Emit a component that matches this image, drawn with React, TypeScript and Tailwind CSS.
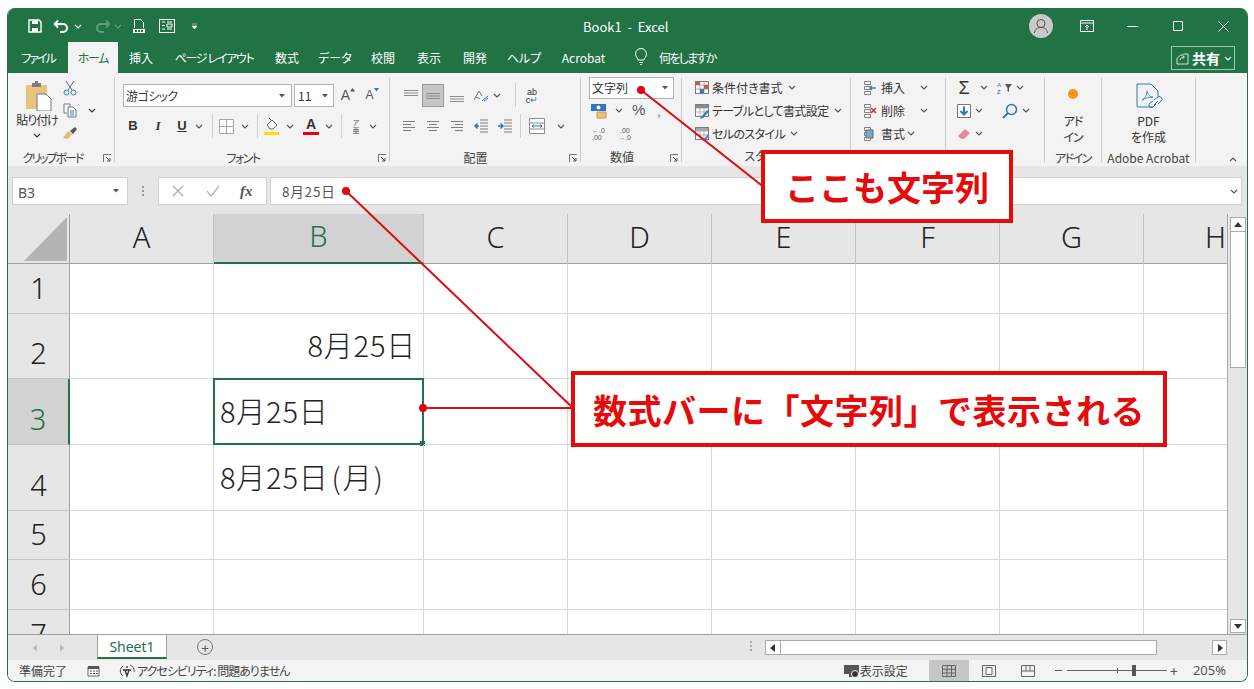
import type { ReactNode } from "react";

const tabs = [
  { label: "ファイル", cls: "w-[60px] tracking-[-2px]" },
  { label: "ホーム", cls: "w-[50px] h-[31px] bg-[#f3f3f3] text-[#217346] tracking-[-1.300px]" },
  { label: "挿入", cls: "w-[46px]" },
  { label: "ページ レイアウト", cls: "w-[100px] tracking-[-1.300px]" },
  { label: "数式", cls: "w-[46px]" },
  { label: "データ", cls: "w-[50px]" },
  { label: "校閲", cls: "w-[46px]" },
  { label: "表示", cls: "w-[46px]" },
  { label: "開発", cls: "w-[46px]" },
  { label: "ヘルプ", cls: "w-[52px]" },
  { label: "Acrobat", cls: "w-[67px]" },
];

const columns = [
  { name: "A", cls: "w-[144px]" },
  { name: "B", cls: "w-[210px] bg-[#d2d2d2] text-[#217346] border-b-2 border-b-[#217346]" },
  { name: "C", cls: "w-[144px]" },
  { name: "D", cls: "w-[144px]" },
  { name: "E", cls: "w-[144px]" },
  { name: "F", cls: "w-[144px]" },
  { name: "G", cls: "w-[144px]" },
  { name: "H", cls: "w-[144px]" },
];

const rows: { n: number; h: string; b?: ReactNode; right?: boolean; active?: boolean }[] = [
  { n: 1, h: "h-[50px]" },
  { n: 2, h: "h-[65px]", b: "8月25日", right: true },
  { n: 3, h: "h-[66px]", b: "8月25日", active: true },
  { n: 4, h: "h-[66px]", b: <>8月25日<span className="ml-[3px] tracking-[2px]">(月)</span></> },
  { n: 5, h: "h-[49px]" },
  { n: 6, h: "h-[50px]" },
  { n: 7, h: "h-[50px]" },
];

function Chev({ className = "text-[#555]" }: { className?: string }) {
  return (
    <svg width="8" height="5" viewBox="0 0 8 5" className={className}>
      <path d="M1 1l3 3 3-3" fill="none" stroke="currentColor" strokeWidth="1.1" />
    </svg>
  );
}

function Drop() {
  return (
    <svg width="6" height="4" viewBox="0 0 6 4" className="text-[#555]">
      <path d="M0 0h6L3 3.500z" fill="currentColor" />
    </svg>
  );
}

function Launcher() {
  return (
    <svg width="9" height="9" viewBox="0 0 9 9" className="absolute bottom-[-1px] right-[2px]">
      <path d="M.5 8V.5H8" fill="none" stroke="#777" />
      <path d="M3 3l4 4M7 4v3H4" fill="none" stroke="#555" />
    </svg>
  );
}

function Sep() {
  return <div className="h-[24px] w-px bg-[#d0d0d0]" />;
}

function Group({ className, label, launcher, children }: { className: string; label: ReactNode; launcher?: boolean; children: ReactNode }) {
  return (
    <div className={`relative h-[84px] shrink-0 border-r border-[#c9c9c9] ${className}`}>
      <div className="h-[72px]">{children}</div>
      <div className="flex h-[14px] items-center justify-center whitespace-nowrap pt-[1px] text-[12px] text-[#444]">{label}</div>
      {launcher && <Launcher />}
    </div>
  );
}

function Lines({ kind }: { kind: "l" | "c" | "r" }) {
  const w = [12, 8, 12, 8];
  return (
    <svg width="14" height="14" viewBox="0 0 14 14">
      {w.map((v, i) => {
        const x = kind === "l" ? 1 : kind === "r" ? 13 - v : 7 - v / 2;
        return <rect key={i} x={x} y={2 + i * 3} width={v} height="1" fill="#808080" />;
      })}
    </svg>
  );
}

function VLines({ top }: { top: number }) {
  return (
    <svg width="16" height="14" viewBox="0 0 16 14">
      {[0, 1, 2].map((i) => (
        <rect key={i} x="1" y={top + i * 2.500} width="14" height="1" fill="#8a8a8a" />
      ))}
    </svg>
  );
}

function Indent({ flip }: { flip?: boolean }) {
  return (
    <svg width="16" height="14" viewBox="0 0 16 14">
      {[1, 4, 7, 10, 13].map((y) => (
        <rect key={y} x="7" y={y - 0.5} width="8" height="1" fill="#808080" />
      ))}
      <path d={flip ? "M1 7h4M3.500 4.500L6 7 3.500 9.500" : "M6 7H2M4.500 4.500L2 7l2.500 2.500"} fill="none" stroke="#2f74c0" strokeWidth="1.500" />
    </svg>
  );
}

function ListIcon({ kind }: { kind: "cond" | "table" | "cell" }) {
  return (
    <svg width="16" height="16" viewBox="0 0 16 16">
      <rect x="1.500" y="1.500" width="13" height="12" fill="#fff" stroke="#7a7a7a" />
      <path d="M1.500 5h13M1.500 9h13M6 1.500v12M10 1.500v12" stroke="#a0a0a0" strokeWidth="0.8" />
      {kind === "cond" && <path d="M2 2h4v3H2zM10 5h4v4h-4z" fill="#d2583a" />}
      {kind === "cond" && <path d="M6 9h4v4H6z" fill="#3c78c0" />}
      {kind === "table" && <path d="M2 2h12v3H2z" fill="#8c8c8c" />}
      {kind === "table" && <path d="M7 14l6-7 2 1.500-6 6.500-3 1z" fill="#3c78c0" />}
      {kind === "cell" && <path d="M2 2h12v3H2z" fill="#a8a8a8" />}
      {kind === "cell" && <path d="M9 14l5-6 1.500 1.500-5 6z" fill="#4a8ad0" />}
    </svg>
  );
}

function StyleRow({ kind, label, tight }: { kind: "cond" | "table" | "cell"; label: string; tight?: boolean }) {
  return (
    <div className="flex h-[23px] items-center gap-[2px] whitespace-nowrap">
      <ListIcon kind={kind} />
      <span className={tight ? "tracking-[-0.6px]" : ""}>{label}</span>
      <Chev className="ml-[3px] text-[#555]" />
    </div>
  );
}

function CellsIcon({ kind }: { kind: "ins" | "del" | "fmt" }) {
  return (
    <svg width="16" height="16" viewBox="0 0 16 16">
      <path d="M3.500 1.500h6v3h-6zM3.500 6.500h6v3h-6zM3.500 11.500h6v3h-6z" fill="#fff" stroke="#808080" />
      {kind === "ins" && <path d="M9 8h6M11 6l-2 2 2 2" fill="none" stroke="#3a7cc4" strokeWidth="1.300" />}
      {kind === "del" && <path d="M10 5l5 5M15 5l-5 5" stroke="#d83b2b" strokeWidth="1.700" />}
      {kind === "fmt" && <path d="M5 4h7v8H5z" fill="#7ea6d2" stroke="#666" />}
    </svg>
  );
}

function FontSizeIcon({ up }: { up?: boolean }) {
  return (
    <div className="flex h-[23px] w-[16px] items-start justify-center pt-[3px] text-[#555]">
      <span className={`font-['Liberation_Sans',sans-serif] leading-none ${up ? "mt-[1px] text-[14px]" : "mt-[2px] text-[12px]"}`}>A</span>
      <svg width="5" height="4" viewBox="0 0 5 4" className="mt-[1px]">
        <path d={up ? "M0 3.500h5L2.500 0z" : "M0 0h5L2.500 3.500z"} fill={up ? "#555" : "#2f74c0"} />
      </svg>
    </div>
  );
}

function Scrollbtn({ d, className }: { d: string; className: string }) {
  return (
    <div className={`flex shrink-0 items-center justify-center border border-[#ababab] bg-white ${className}`}>
      <svg width="8" height="8" viewBox="0 0 8 8">
        <path d={d} fill="#333" />
      </svg>
    </div>
  );
}

function TitleBar() {
  return (
    <div className="relative flex h-[34px] shrink-0 items-center bg-[#217346] pt-[2px] text-white">
      <div className="ml-[19px] flex items-center">
        <svg width="16" height="16" viewBox="0 0 16 16">
          <path d="M2 2h10l2 2v10H2z" fill="none" stroke="#fff" strokeWidth="1.400" />
          <path d="M5 2.500h6v3.500H5z" fill="#fff" />
          <path d="M5 10h6v4H5z" fill="#fff" />
        </svg>
        <svg width="18" height="16" viewBox="0 0 18 16" className="ml-[10px]">
          <path d="M2 6h8a4 4 0 0 1 0 8H7M5 2.500L1.800 6 5 9.500" fill="none" stroke="#fff" strokeWidth="2" />
        </svg>
        <Chev className="ml-[3px] text-white" />
        <svg width="18" height="16" viewBox="0 0 18 16" className="ml-[11px]">
          <path d="M16 6H8a4 4 0 0 0 0 8h3M13 2.500L16.200 6 13 9.500" fill="none" stroke="#5f9d7e" strokeWidth="2" />
        </svg>
        <Chev className="ml-[3px] text-[#5f9d7e]" />
        <svg width="14" height="16" viewBox="0 0 14 16" className="ml-[10px]">
          <path d="M2.500 10V1.500h6l3 3V10" fill="none" stroke="#fff" />
          <path d="M1 11h12v4H1z" fill="#fff" />
          <path d="M3 12h2v2H3zM6 12h2v2H6zM9 12h2v2H9z" fill="#217346" />
        </svg>
        <svg width="16" height="14" viewBox="0 0 16 14" className="ml-[13px]">
          <rect x="0.500" y="0.500" width="15" height="13" fill="none" stroke="#fff" />
          <path d="M3 3h3M8 3h5M3 6.500h3M8 5h5v3H8zM3 10h3M8 10h5" stroke="#fff" fill="none" />
        </svg>
        <svg width="7" height="7" viewBox="0 0 7 7" className="ml-[16px]">
          <path d="M1 1h5M1 3h5L3.500 6z" fill="#fff" stroke="#fff" strokeWidth="0.500" />
        </svg>
      </div>
      <div className="absolute left-[575px] top-[2px] flex h-full items-center whitespace-pre text-[13px]">Book1  -  Excel</div>
      <div className="ml-auto flex items-center">
        <div className="flex h-[24px] w-[24px] items-center justify-center rounded-full bg-[#c9c9c9]">
          <svg width="18" height="18" viewBox="0 0 18 18">
            <circle cx="9" cy="6.500" r="4" fill="none" stroke="#555" />
            <path d="M2.500 16c.5-4 3-5.500 6.500-5.500s6 1.500 6.500 5.500" fill="none" stroke="#555" />
          </svg>
        </div>
        <svg width="14" height="12" viewBox="0 0 14 12" className="ml-[27px]">
          <path d="M.5.500h13v11H.5zM.5 3h13" fill="none" stroke="#fff" />
          <path d="M7 10V5M5 7l2-2 2 2" fill="none" stroke="#fff" />
        </svg>
        <div className="ml-[33px] h-px w-[11px] bg-white" />
        <div className="ml-[35px] h-[10px] w-[10px] rounded-[1px] border border-white" />
        <svg width="11" height="11" viewBox="0 0 11 11" className="ml-[35px] mr-[18px]">
          <path d="M.5.500l10 10M10.500.500l-10 10" stroke="#fff" />
        </svg>
      </div>
    </div>
  );
}

function TabBar() {
  return (
    <div className="flex h-[31px] shrink-0 items-start bg-[#217346] text-[12px] text-white [font-feature-settings:'palt']">
      {tabs.map((t) => (
        <div key={t.label} className={`flex h-[31px] shrink-0 items-center justify-center whitespace-nowrap ${t.cls}`}>
          {t.label}
        </div>
      ))}
      <svg width="14" height="18" viewBox="0 0 14 18" className="ml-[17px] mt-[6px]">
        <path d="M4 12c0-2-2.500-3-2.500-6a5.500 5.500 0 0 1 11 0c0 3-2.500 4-2.500 6zM5 14.500h4M6 16.500h2" fill="none" stroke="#fff" />
      </svg>
      <div className="ml-[11px] flex h-[31px] items-center tracking-[-1.700px]">何をしますか</div>
      <div className="ml-auto mr-[12px] mt-[4px] flex h-[24px] w-[64px] items-center border border-[#9fc5b0] pl-[4px]">
        <svg width="13" height="13" viewBox="0 0 13 13">
          <path d="M7 2h5v10H1V6.500L4.500 3H7" fill="none" stroke="#fff" strokeWidth="0.800" />
          <path d="M4 8c.5-2 2-3 4-3M6.500 3.500L8.500 5 6.500 6.500" fill="none" stroke="#fff" strokeWidth="0.800" />
        </svg>
        <span className="ml-[3px] text-[14px] font-bold leading-none">共有</span>
        <Chev className="ml-[4px] text-white" />
      </div>
    </div>
  );
}

function Ribbon() {
  return (
    <div className="flex h-[93px] shrink-0 bg-[#f3f3f3] pt-[5px] text-[12px] text-[#333] [font-feature-settings:'palt']">
      <Group className="w-[107px]" label={<span className="-ml-[17px] tracking-[-2px]">クリップボード</span>} launcher>
        <div className="flex">
          <div className="ml-[9px] flex w-[40px] flex-col items-center">
            <svg width="28" height="30" viewBox="0 0 28 30" className="ml-[4px] mt-[3px]">
              <path d="M1 4h21v24H1z" fill="#e8c27f" />
              <path d="M7 2h3V0h3v2h3v4H7z" fill="#7d7d7d" />
              <path d="M12 13h9l5 5v12H12z" fill="#fff" stroke="#777" />
            </svg>
            <span className="whitespace-nowrap tracking-[-1px]">貼り付け</span>
            <Chev className="mt-[4px]" />
          </div>
          <div className="ml-[5px] flex flex-col items-center">
            <svg width="14" height="16" viewBox="0 0 14 16" className="mt-[2px]">
              <path d="M3 1l6 9M11 1l-6 9" stroke="#666" />
              <circle cx="3.500" cy="12.500" r="2.500" fill="none" stroke="#3c78c0" />
              <circle cx="10.500" cy="12.500" r="2.500" fill="none" stroke="#3c78c0" />
            </svg>
            <svg width="14" height="15" viewBox="0 0 14 15" className="mt-[7px]">
              <path d="M1 1h6v3M1 1v9h3" fill="#fff" stroke="#777" />
              <path d="M5 4h5l3 3v7H5z" fill="#fff" stroke="#777" />
              <path d="M7 8h4M7 10h4M7 12h4" stroke="#3c78c0" />
            </svg>
            <svg width="16" height="14" viewBox="0 0 16 14" className="mt-[8px]">
              <path d="M1 12l5-7 4 3-4 5z" fill="#e3bb76" />
              <path d="M8 5l5-4 2 2-4 5z" fill="#555" />
            </svg>
          </div>
          <Chev className="ml-[10px] mt-[30px]" />
        </div>
      </Group>

      <Group className="w-[275px]" label={<span className="-ml-[18px] tracking-[-1.500px]">フォント</span>} launcher>
        <div className="flex h-[29px] items-end pl-[8px]">
          <div className="flex h-[23px] w-[169px] items-center justify-between border border-[#b4b4b4] bg-white pl-[2px] pr-[6px] text-[12px] tracking-[-0.6px]">
            游ゴシック
            <Drop />
          </div>
          <div className="ml-[2px] flex h-[23px] w-[40px] items-center justify-between border border-[#b4b4b4] bg-white pl-[3px] pr-[5px] text-[12px]">
            11
            <Drop />
          </div>
          <div className="ml-[6px]"><FontSizeIcon up /></div>
          <div className="ml-[8px]"><FontSizeIcon /></div>
        </div>
        <div className="mt-[7px] flex h-[24px] items-center pl-[8px]">
          <b className="flex w-[20px] justify-center font-['Liberation_Sans',sans-serif] text-[13px]">B</b>
          <i className="ml-[5px] flex w-[20px] justify-center font-['Liberation_Serif',serif] text-[13px] font-bold">I</i>
          <u className="ml-[4px] flex w-[20px] justify-center font-['Liberation_Sans',sans-serif] text-[13px] font-bold">U</u>
          <div className="flex w-[14px] justify-center"><Chev /></div>
          <div className="ml-[6px]"><Sep /></div>
          <div className="ml-[3px] flex w-[20px] justify-center">
            <svg width="15" height="15" viewBox="0 0 15 15">
              <path d="M.5.500h14v14H.5zM7.500.500v14M.5 7.500h14" fill="#fff" stroke="#a5a5a5" />
            </svg>
          </div>
          <div className="ml-[2px] flex w-[14px] justify-center"><Chev /></div>
          <div className="ml-[5px]"><Sep /></div>
          <div className="ml-[4px] flex w-[20px] justify-center">
            <svg width="16" height="18" viewBox="0 0 16 18">
              <path d="M3 8l5-5 5 5-4 4H6z" fill="#fff" stroke="#666" />
              <path d="M5 1l3 3" stroke="#666" />
              <path d="M0 15h15v3H0z" fill="#f5e500" />
            </svg>
          </div>
          <div className="ml-[1px] flex w-[14px] justify-center"><Chev /></div>
          <div className="ml-[4px] flex w-[20px] flex-col items-center">
            <span className="font-['Liberation_Sans',sans-serif] text-[14px] font-bold leading-[14px]">A</span>
            <div className="mt-[1px] h-[3px] w-[16px] bg-[#e60012]" />
          </div>
          <div className="ml-[1px] flex w-[14px] justify-center"><Chev /></div>
          <div className="ml-[5px]"><Sep /></div>
          <div className="ml-[4px] flex w-[20px] flex-col items-center text-[7px] leading-[8px] text-[#555]">
            <span>ア</span>
            <span>亜</span>
          </div>
          <div className="flex w-[14px] justify-center"><Chev /></div>
        </div>
      </Group>

      <Group className="w-[191px]" label={<span className="-ml-[19px]">配置</span>} launcher>
        <div className="flex h-[29px] items-end pl-[10px]">
          <div className="flex h-[23px] w-[22px] items-center justify-center"><VLines top={1} /></div>
          <div className="flex h-[23px] w-[22px] items-center justify-center border border-[#9a9a9a] bg-[#c6c6c6]"><VLines top={4} /></div>
          <div className="ml-[2px] flex h-[23px] w-[22px] items-center justify-center"><VLines top={7} /></div>
          <div className="ml-[3px] flex h-[23px] w-[20px] items-center justify-center">
            <svg width="16" height="14" viewBox="0 0 16 14">
              <path d="M1 11l5-9 3 5M3 8l4 2" fill="none" stroke="#777" />
              <path d="M9 12l6-5M11 12l4-3" stroke="#3c78c0" />
            </svg>
          </div>
          <div className="flex h-[23px] w-[12px] items-center justify-center"><Chev /></div>
          <div className="ml-[12px]"><Sep /></div>
          <div className="ml-[6px] flex h-[23px] w-[20px] flex-col items-center justify-center font-['Liberation_Sans',sans-serif] text-[9px] leading-[8px]">
            <span>ab</span>
            <span>c<span className="text-[#2f74c0]">↵</span></span>
          </div>
        </div>
        <div className="mt-[7px] flex h-[24px] items-center pl-[12px]">
          <div className="flex w-[14px] justify-center"><Lines kind="l" /></div>
          <div className="ml-[10px] flex w-[14px] justify-center"><Lines kind="c" /></div>
          <div className="ml-[10px] flex w-[14px] justify-center"><Lines kind="r" /></div>
          <div className="ml-[9px] flex w-[16px] justify-center"><Indent /></div>
          <div className="ml-[8px] flex w-[16px] justify-center"><Indent flip /></div>
          <div className="ml-[7px]"><Sep /></div>
          <div className="ml-[7px] flex w-[18px] justify-center">
            <svg width="16" height="16" viewBox="0 0 16 16">
              <path d="M.5.500h15v15H.5zM.5 5h15M.5 11h15" fill="#fff" stroke="#8a8a8a" />
              <path d="M3 8h10M5 6.500L3 8l2 1.500M11 6.500L13 8l-2 1.500" fill="none" stroke="#2f74c0" />
            </svg>
          </div>
          <div className="ml-[10px] flex w-[10px] justify-center"><Chev /></div>
        </div>
      </Group>

      <Group className="w-[101px]" label={<span className="-ml-[18px]">数値</span>} launcher>
        <div className="ml-[8px] mt-[-1px] flex h-[22px] w-[85px] items-center justify-between border border-[#b4b4b4] bg-white pl-[2px] pr-[5px]">
          文字列
          <Drop />
        </div>
        <div className="flex h-[23px] items-center pl-[10px]">
          <svg width="16" height="16" viewBox="0 0 16 16">
            <path d="M0 1h15v7H0z" fill="#2f74c0" />
            <circle cx="7.500" cy="4.500" r="2" fill="#fff" />
            <path d="M6 9h9v6H6z" fill="#e8c27f" stroke="#c89b4a" />
          </svg>
          <Chev className="ml-[8px] text-[#555]" />
          <span className="ml-[9px] font-['Liberation_Sans',sans-serif] text-[15px] text-[#555]">%</span>
          <span className="ml-[12px] text-[#888]">,</span>
        </div>
        <div className="flex h-[23px] items-center pl-[11px] font-['Liberation_Sans',sans-serif] text-[7px] leading-[7px] text-[#555]">
          <div className="w-[14px]">
            <span className="text-[#2f74c0]">←</span>.0
            <br />
            .00
          </div>
          <div className="ml-[12px] w-[14px]">
            &nbsp;.00
            <br />
            <span className="text-[#2f74c0]">→</span>.0
          </div>
        </div>
      </Group>

      <Group className="w-[169px]" label="スタイル">
        <div className="-mt-[2px] pl-[12px]">
          <StyleRow kind="cond" label="条件付き書式" />
          <StyleRow kind="table" label="テーブルとして書式設定" tight />
          <StyleRow kind="cell" label="セルのスタイル" tight />
        </div>
      </Group>

      <Group className="w-[95px]" label="">
        <div className="-mt-[2px] pl-[10px]">
          {[
            { k: "ins" as const, t: "挿入", c: "ml-[15px]" },
            { k: "del" as const, t: "削除", c: "ml-[15px]" },
            { k: "fmt" as const, t: "書式", c: "ml-[2px]" },
          ].map((r) => (
            <div key={r.t} className="flex h-[23px] items-center whitespace-nowrap">
              <CellsIcon kind={r.k} />
              <span className="ml-[4px]">{r.t}</span>
              <Chev className={`${r.c} text-[#555]`} />
            </div>
          ))}
        </div>
      </Group>

      <Group className="w-[99px]" label="">
        <div className="-mt-[2px] flex h-[23px] items-center pl-[10px]">
          <span className="flex w-[16px] justify-center font-['Liberation_Sans',sans-serif] text-[18px] leading-none">Σ</span>
          <Chev className="ml-[8px] text-[#555]" />
          <svg width="16" height="14" viewBox="0 0 16 14" className="ml-[9px]">
            <text x="0" y="6" fontSize="6" fill="#2f74c0" fontFamily="Liberation Sans">A</text>
            <text x="0" y="13" fontSize="6" fill="#555" fontFamily="Liberation Sans">Z</text>
            <path d="M8 3h7l-3 4v4l-1.500-1V7z" fill="#555" />
          </svg>
          <Chev className="ml-[3px] text-[#555]" />
        </div>
        <div className="flex h-[23px] items-center pl-[11px]">
          <svg width="14" height="14" viewBox="0 0 14 14">
            <path d="M.5.500h13v13H.5z" fill="#fff" stroke="#777" />
            <path d="M7 2.500v8M3.500 7L7 10.500 10.500 7" fill="none" stroke="#2f74c0" strokeWidth="2" />
          </svg>
          <Chev className="ml-[4px] text-[#555]" />
          <svg width="16" height="16" viewBox="0 0 16 16" className="ml-[19px]">
            <circle cx="9.500" cy="6.500" r="5" fill="none" stroke="#2f74c0" strokeWidth="1.500" />
            <path d="M6 10l-5 5" stroke="#2f74c0" strokeWidth="1.800" />
          </svg>
          <Chev className="ml-[4px] text-[#555]" />
        </div>
        <div className="flex h-[23px] items-center pl-[11px]">
          <svg width="14" height="12" viewBox="0 0 14 12">
            <path d="M1 8l7-7 5 4-6 6H4z" fill="#e58aa0" />
          </svg>
          <Chev className="ml-[4px] text-[#555]" />
        </div>
      </Group>

      <Group className="w-[57px]" label={<span className="tracking-[-1.500px]">アドイン</span>}>
        <div className="flex flex-col items-center">
          <div className="mt-[11px] h-[10px] w-[10px] rounded-full bg-[#f7941d]" />
          <div className="mt-[14px] text-center text-[12px] leading-[16px] tracking-[-1px]">
            アド
            <br />
            イン
          </div>
        </div>
      </Group>

      <Group className="w-[94px]" label="Adobe Acrobat">
        <div className="flex flex-col items-center">
          <svg width="28" height="28" viewBox="0 0 28 28" className="mt-[5px]">
            <path d="M18 24H3a1 1 0 0 1-1-1V1h14l7 7v6" fill="none" stroke="#2f74c0" />
            <path d="M7 17c3-1 5-5 5-9 1 4 3 6 6 6-3 0-8 1-11 3z" fill="none" stroke="#2f74c0" strokeWidth="0.800" />
            <path d="M19 17l4-3a2.500 2.500 0 0 1 3 4l-3 3M21 21l-3 3a2.500 2.500 0 0 1-3-4l3-2M19 22l4-4" fill="none" stroke="#2f74c0" />
          </svg>
          <div className="mt-[2px] text-center text-[12px] leading-[16px]">
            PDF
            <br />
            を作成
          </div>
        </div>
      </Group>

      <div className="relative flex-1">
        <Chev className="absolute bottom-[4px] right-[10px] rotate-180 text-[#555]" />
      </div>
    </div>
  );
}

function FormulaBar() {
  return (
    <div className="flex h-[48px] shrink-0 bg-[#e6e6e6] pl-[4px] pr-[5px] pt-[11px] text-[#555]">
      <div className="flex h-[28px] w-[116px] items-center justify-between border border-[#d0d0d0] bg-white pl-[5px] pr-[8px] text-[14px]">
        <span className="pt-[3px] font-['Noto_Sans',sans-serif]">B3</span>
        <Drop />
      </div>
      <div className="ml-[12px] flex h-[28px] w-[6px] flex-col items-center justify-center gap-[2px]">
        <i className="h-[2px] w-[2px] bg-[#999]" />
        <i className="h-[2px] w-[2px] bg-[#999]" />
        <i className="h-[2px] w-[2px] bg-[#999]" />
      </div>
      <div className="ml-[12px] flex h-[28px] w-[109px] items-center border border-[#d0d0d0] bg-white pl-[13px]">
        <svg width="12" height="12" viewBox="0 0 12 12">
          <path d="M1 1l10 10M11 1L1 11" stroke="#aaa" strokeWidth="1.300" />
        </svg>
        <svg width="14" height="12" viewBox="0 0 14 12" className="ml-[22px]">
          <path d="M1 6l4 5 8-10" fill="none" stroke="#bbb" strokeWidth="1.500" />
        </svg>
        <span className="ml-[20px] font-['Liberation_Serif',serif] text-[15px] font-bold italic leading-none text-[#555]">fx</span>
      </div>
      <div className="ml-[3px] flex h-[28px] flex-1 items-center justify-between border border-[#d0d0d0] bg-white pl-[11px] pr-[2px] text-[13.500px] tracking-[0.8px]">
        8月25日
        <Chev className="mr-[1px] text-[#555]" />
      </div>
    </div>
  );
}

function Sheet() {
  return (
    <div className="flex h-[420px] shrink-0 text-[#222]">
      <div className="h-full w-[1220px] overflow-hidden border-r border-[#ababab] bg-white">
        <div className="flex h-[50px] border-b border-[#9f9f9f] bg-[#e6e6e6] text-[29px] font-light">
          <div className="flex h-[49px] w-[62px] shrink-0 items-end justify-end border-r border-[#9f9f9f] pb-[2px] pr-[2px]">
            <div className="h-[44px] w-[43px] bg-[#b4b4b4] [clip-path:polygon(100%_0,100%_100%,0_100%)]" />
          </div>
          {columns.map((c) => (
            <div key={c.name} className={`flex h-[50px] shrink-0 items-center justify-center border-r border-[#c4c4c4] pb-[4px] font-['Noto_Sans',sans-serif] ${c.cls}`}>
              {c.name}
            </div>
          ))}
        </div>
        {rows.map((r) => (
          <div key={r.n} className={`flex ${r.h}`}>
            <div className={`flex w-[62px] shrink-0 items-end justify-center border-b border-r font-['Noto_Sans',sans-serif] text-[29px] font-light leading-[50px] ${r.active ? "border-r-2 border-b-[#c4c4c4] border-r-[#217346] bg-[#d2d2d2] text-[#217346]" : "border-b-[#c4c4c4] border-r-[#9f9f9f] bg-[#e6e6e6]"}`}>
              {r.n}
            </div>
            {columns.map((c) => (
              <div key={c.name} className={`relative flex shrink-0 items-center whitespace-nowrap border-b border-r border-[#d8d8d8] pb-[2px] text-[29px] font-light tracking-[0.8px] ${c.cls.split(" ")[0]} ${r.right ? "justify-end pr-[7px]" : "pl-[6px]"}`}>
                {c.name === "B" && r.b}
                {c.name === "B" && r.active && (
                  <div className="absolute inset-[-1px] border-2 border-[#217346]">
                    <div className="absolute bottom-[-3px] right-[-3px] h-[5px] w-[5px] bg-[#217346]" />
                  </div>
                )}
              </div>
            ))}
          </div>
        ))}
      </div>
      <div className="flex w-[19px] shrink-0 flex-col items-start bg-[#e6e6e6] pl-[2px] pt-[3px]">
        <Scrollbtn d="M0 6h8L4 1z" className="h-[15px] w-[16px]" />
        <div className="h-[136px] w-[16px] border border-t-0 border-[#ababab] bg-white" />
        <div className="flex-1" />
        <Scrollbtn d="M0 2h8L4 7z" className="mb-[1px] h-[14px] w-[16px]" />
      </div>
    </div>
  );
}

function SheetTabs() {
  return (
    <div className="flex h-[26px] shrink-0 items-start border-t border-[#9f9f9f] bg-[#e6e6e6]">
      <svg width="34" height="10" viewBox="0 0 34 10" className="ml-[24px] mt-[8px] shrink-0">
        <path d="M5 1L1 5l4 4zM28 1l4 4-4 4z" fill="#bdbdbd" />
      </svg>
      <div className="ml-[31px] flex h-[24px] w-[70px] shrink-0 items-center justify-center border-x border-b-2 border-x-[#9f9f9f] border-b-[#217346] bg-white font-['Noto_Sans',sans-serif] text-[14px] text-[#217346]">
        Sheet1
      </div>
      <div className="ml-[30px] mt-[4px] flex h-[16px] w-[16px] shrink-0 items-center justify-center rounded-full border border-[#777] text-[13px] leading-none text-[#555]">+</div>
      <div className="ml-[537px] mt-[6px] flex shrink-0 flex-col gap-[2px]">
        <i className="h-[2px] w-[2px] bg-[#aaa]" />
        <i className="h-[2px] w-[2px] bg-[#aaa]" />
        <i className="h-[2px] w-[2px] bg-[#aaa]" />
      </div>
      <Scrollbtn d="M6 0v8L1 4z" className="ml-[13px] mt-[5px] h-[15px] w-[16px]" />
      <div className="mt-[5px] h-[15px] w-[376px] shrink-0 border-y border-r border-[#ababab] bg-white" />
      <div className="mt-[5px] h-[15px] w-[55px] shrink-0" />
      <Scrollbtn d="M2 0v8l5-4z" className="mt-[5px] h-[15px] w-[15px]" />
    </div>
  );
}

function StatusBar() {
  return (
    <div className="flex h-[21px] shrink-0 items-center bg-[#f3f3f3] text-[12px] text-[#444] [font-feature-settings:'palt']">
      <span className="ml-[11px]">準備完了</span>
      <svg width="13" height="12" viewBox="0 0 13 12" className="ml-[20px]">
        <path d="M1 2h11v9H1z" fill="#fff" stroke="#666" />
        <path d="M1 1h11v3H1z" fill="#555" />
        <path d="M3 6h2M6 6h2M9 6h2M3 8.500h2M6 8.500h2M9 8.500h2" stroke="#555" />
      </svg>
      <svg width="18" height="14" viewBox="0 0 18 14" className="ml-[18px]">
        <path d="M5 2a6 6 0 0 0 0 10M12 1a6 6 0 0 1 4 7" fill="none" stroke="#555" />
        <path d="M5 6h8M7 6l2 6 2-6M9 2v2" fill="none" stroke="#333" strokeWidth="1.300" />
      </svg>
      <span className="ml-[1px] tracking-[-1px]">アクセシビリティ: 問題ありません</span>
      <div className="ml-auto mr-[21px] flex items-center">
        <svg width="16" height="14" viewBox="0 0 16 14">
          <path d="M0 1h15v9H9v3H5v-3H0z" fill="#555" />
          <circle cx="11" cy="10" r="3.500" fill="#333" stroke="#f3f3f3" />
        </svg>
        <span>表示設定</span>
        <div className="ml-[21px] flex h-[21px] w-[40px] items-center justify-center bg-[#c6c6c6]">
          <svg width="14" height="12" viewBox="0 0 14 12">
            <path d="M.5.500h13v11H.5zM5 .5v11M9.500.5v11M.5 4.300h13M.5 8h13" fill="none" stroke="#666" />
          </svg>
        </div>
        <svg width="14" height="12" viewBox="0 0 14 12" className="ml-[13px]">
          <path d="M.5.500h13v11H.5z" fill="none" stroke="#666" />
          <path d="M4 2.500h6v7H4z" fill="none" stroke="#666" />
        </svg>
        <svg width="14" height="12" viewBox="0 0 14 12" className="ml-[25px]">
          <path d="M.5.500h13v11H.5zM.5 6h13M5 .5V6M9 .5V6" fill="none" stroke="#666" />
        </svg>
        <div className="ml-[20px] h-px w-[7px] bg-[#555]" />
        <div className="relative ml-[5px] h-px w-[100px] bg-[#666]">
          <div className="absolute left-[50px] top-[-2px] h-[5px] w-px bg-[#666]" />
          <div className="absolute left-[65px] top-[-5px] h-[11px] w-[4px] bg-[#555]" />
        </div>
        <span className="w-[14px] text-center text-[14px] leading-none text-[#555]">+</span>
        <span className="ml-[12px] font-['Noto_Sans',sans-serif] text-[13px] text-[#555]">205%</span>
      </div>
    </div>
  );
}

function Annotations() {
  return (
    <>
      <svg width="1254" height="689" viewBox="0 0 1254 689" className="absolute left-0 top-0">
        <path d="M641 90L765 188M346 191L574 409M423 408H574" fill="none" stroke="#dd0b15" strokeWidth="2" />
        <circle cx="641" cy="90" r="4" fill="#e60012" />
        <circle cx="346" cy="191" r="4" fill="#e60012" />
        <circle cx="423" cy="408" r="4" fill="#e60012" />
      </svg>
      <div className="absolute left-[761px] top-[150px] flex h-[73px] w-[252px] items-center justify-center border-[4px] border-[#e60b0b] bg-white text-[34px] font-bold text-[#e60b0b]">
        ここも文字列
      </div>
      <div className="absolute left-[571px] top-[371px] flex h-[76px] w-[596px] items-center justify-center whitespace-nowrap border-[4px] border-[#e60b0b] bg-white text-[34px] font-bold tracking-[0.5px] text-[#e60b0b]">
        数式バーに「文字列」で表示される
      </div>
    </>
  );
}

export default function App() {
  return (
    <div className="relative h-[689px] w-[1254px] overflow-hidden bg-white pb-[7px] pl-[7px] pr-[6px] pt-[8px] font-['Noto_Sans_CJK_JP','Noto_Sans',sans-serif]">
      <div className="flex h-[674px] flex-col overflow-hidden rounded-[8px] border-x border-b border-[#217346]">
        <TitleBar />
        <TabBar />
        <Ribbon />
        <FormulaBar />
        <Sheet />
        <SheetTabs />
        <StatusBar />
      </div>
      <Annotations />
    </div>
  );
}
